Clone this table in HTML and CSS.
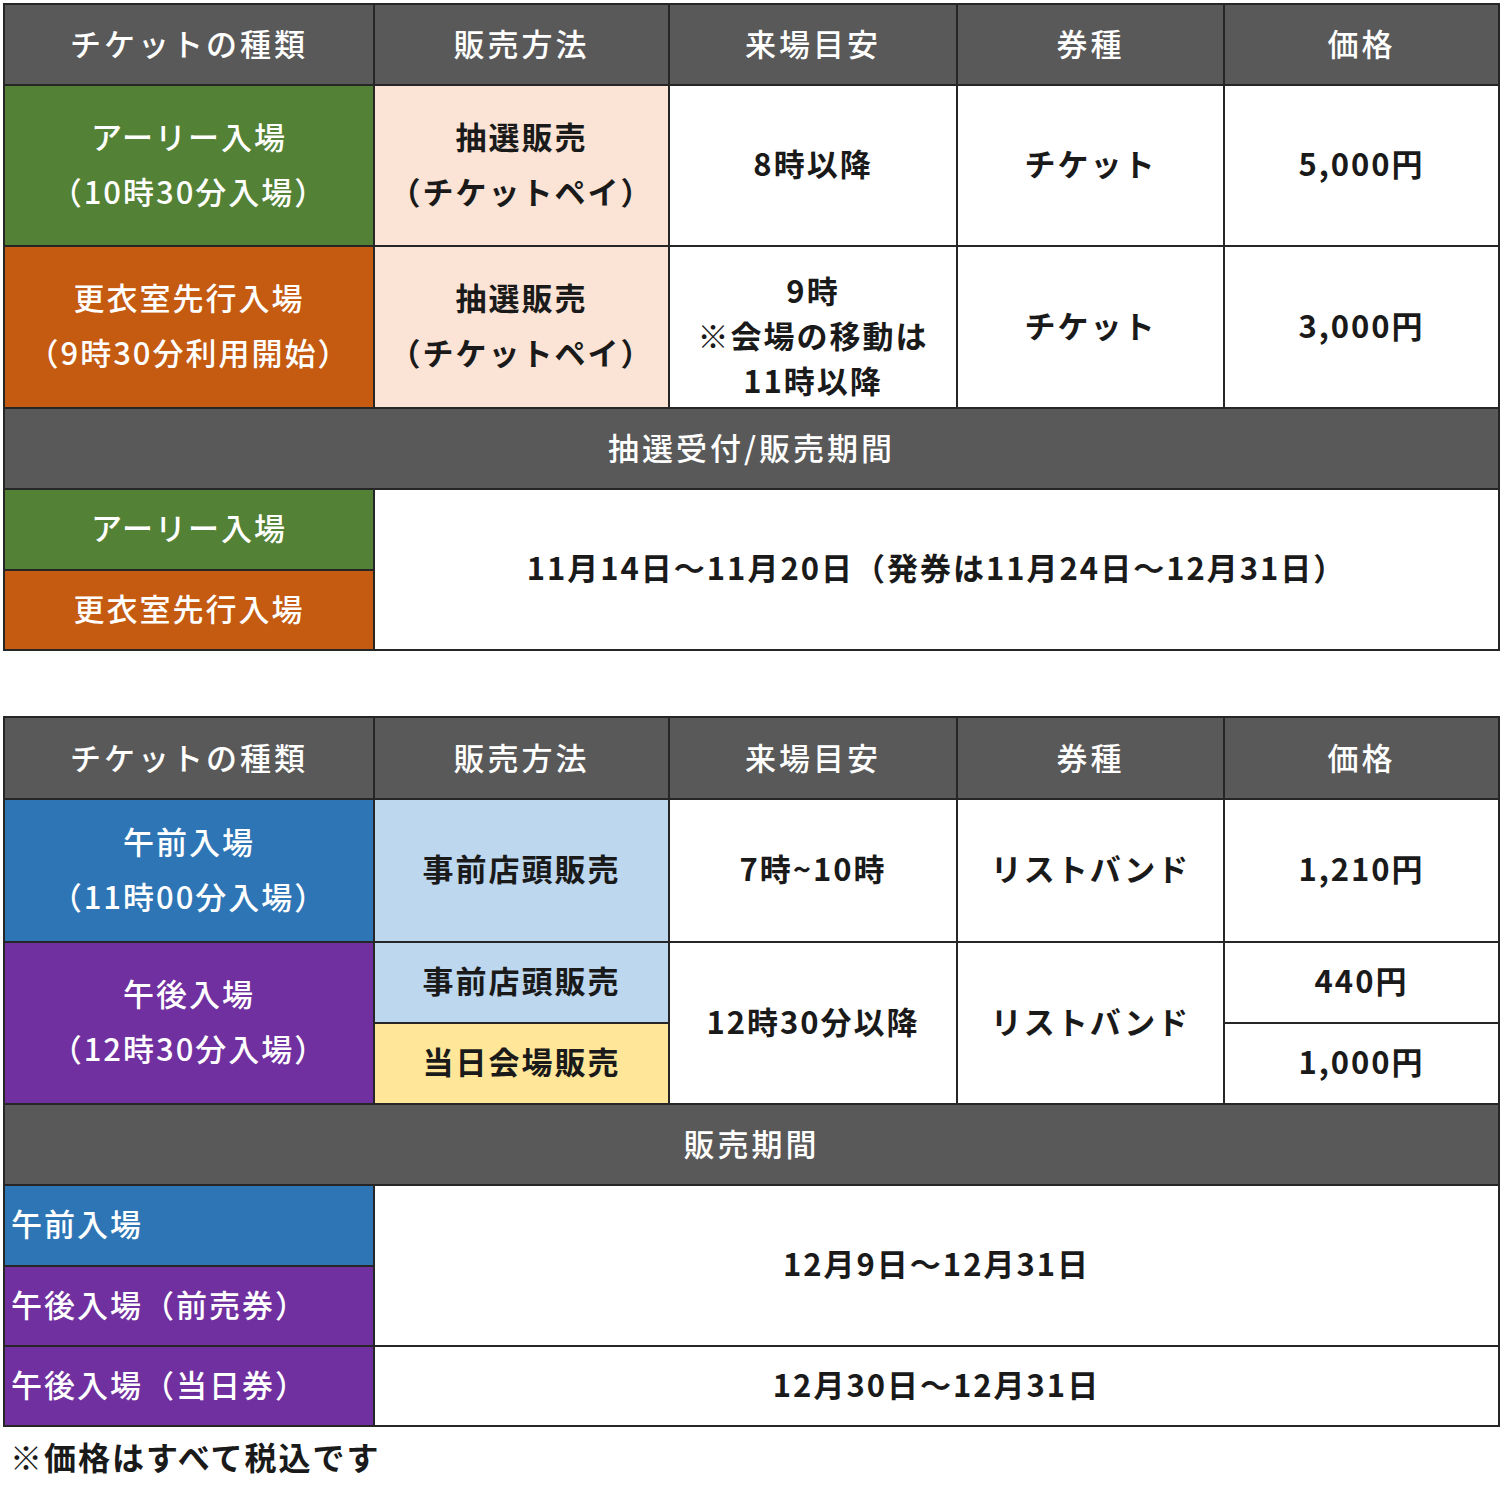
FILE: index.html
```html
<!DOCTYPE html>
<html lang="ja">
<head>
<meta charset="utf-8">
<link rel="stylesheet" href="styles.css">
</head>
<body>
<table class="tbl tbl1">
  <colgroup><col class="c1"><col class="c2"><col class="c3"><col class="c4"><col class="c5"></colgroup>
  <tr class="h-head">
    <th>チケットの種類</th><th>販売方法</th><th>来場目安</th><th>券種</th><th>価格</th>
  </tr>
  <tr class="h-row1">
    <td class="green white">アーリー入場<br>（10時30分入場）</td>
    <td class="peach">抽選販売<br>（チケットペイ）</td>
    <td>8時以降</td>
    <td>チケット</td>
    <td>5,000円</td>
  </tr>
  <tr class="h-row2">
    <td class="orange white">更衣室先行入場<br>（9時30分利用開始）</td>
    <td class="peach">抽選販売<br>（チケットペイ）</td>
    <td class="tight">9時<br>※会場の移動は<br>11時以降</td>
    <td>チケット</td>
    <td>3,000円</td>
  </tr>
  <tr class="h-sec">
    <th colspan="5">抽選受付/販売期間</th>
  </tr>
  <tr class="h-p1">
    <td class="green white">アーリー入場</td>
    <td colspan="4" rowspan="2">11月14日～11月20日（発券は11月24日～12月31日）</td>
  </tr>
  <tr class="h-p2">
    <td class="orange white">更衣室先行入場</td>
  </tr>
</table>

<table class="tbl tbl2">
  <colgroup><col class="c1"><col class="c2"><col class="c3"><col class="c4"><col class="c5"></colgroup>
  <tr class="h-head2">
    <th>チケットの種類</th><th>販売方法</th><th>来場目安</th><th>券種</th><th>価格</th>
  </tr>
  <tr class="h-am">
    <td class="blue white">午前入場<br>（11時00分入場）</td>
    <td class="lblue">事前店頭販売</td>
    <td>7時~10時</td>
    <td>リストバンド</td>
    <td>1,210円</td>
  </tr>
  <tr class="h-pm1">
    <td class="purple white" rowspan="2">午後入場<br>（12時30分入場）</td>
    <td class="lblue">事前店頭販売</td>
    <td rowspan="2">12時30分以降</td>
    <td rowspan="2">リストバンド</td>
    <td>440円</td>
  </tr>
  <tr class="h-pm2">
    <td class="yellow">当日会場販売</td>
    <td>1,000円</td>
  </tr>
  <tr class="h-sec2">
    <th colspan="5">販売期間</th>
  </tr>
  <tr class="h-q1">
    <td class="blue white left">午前入場</td>
    <td colspan="4" rowspan="2">12月9日～12月31日</td>
  </tr>
  <tr class="h-q2">
    <td class="purple white left">午後入場（前売券）</td>
  </tr>
  <tr class="h-q3">
    <td class="purple white left">午後入場（当日券）</td>
    <td colspan="4">12月30日～12月31日</td>
  </tr>
</table>
<p class="note">※価格はすべて税込です</p>
</body>
</html>
```

FILE: styles.css
```css
html, body {
  margin: 0;
  padding: 0;
  background: #ffffff;
}
body {
  padding: 3px 3px 0 3px;
  font-family: "Noto Sans CJK JP", "Noto Sans", sans-serif;
  color: #1a1a1a;
}
.tbl {
  border-collapse: collapse;
  table-layout: fixed;
  width: 1495px;
}
.tbl2 {
  margin-top: 65px;
}
.c1 { width: 370px; }
.c2 { width: 295px; }
.c3 { width: 288px; }
.c4 { width: 267px; }
.c5 { width: 275px; }

.tbl th, .tbl td {
  border: 2px solid #262626;
  padding: 0 0 6px 0;
  text-align: center;
  vertical-align: middle;
  font-size: 31px;
  font-weight: 700;
  letter-spacing: 2px;
  line-height: 55px;
}
.tbl th {
  background: #595959;
  color: #ffffff;
  font-weight: 500;
  letter-spacing: 3px;
  padding-bottom: 4px;
}
/* heights = row pitch - 2 (border) - vertical padding */
.h-head th { height: 75px; }
.h-row1 td { height: 153px; }
.h-row2 td { height: 154px; }
.h-sec th { height: 75px; }
.h-p1 td { height: 73px; }
.h-p2 td { height: 72px; }

.h-head2 th { height: 76px; }
.h-am td { height: 135px; }
.h-pm1 td { height: 73px; }
.h-pm2 td { height: 73px; }
.h-sec2 th { height: 75px; }
.h-q1 td { height: 73px; }
.h-q2 td, .h-q3 td { height: 72px; }

.tbl td.tight {
  line-height: 45px;
  padding-top: 14px;
  padding-bottom: 0;
  height: 146px;
}
.tbl td.left { text-align: left; padding-left: 6px; }

.white { color: #ffffff; }
.tbl td.white { font-weight: 500; }
.green { background: #538135; }
.orange { background: #c55a11; }
.peach { background: #fbe4d5; }
.blue { background: #2e75b6; }
.purple { background: #7030a0; }
.lblue { background: #bdd7ee; }
.yellow { background: #ffe699; }

.note {
  margin: 8px 0 0 7px;
  font-size: 32px;
  font-weight: 700;
  letter-spacing: 2px;
  color: #1a1a1a;
  line-height: 42px;
}
```
